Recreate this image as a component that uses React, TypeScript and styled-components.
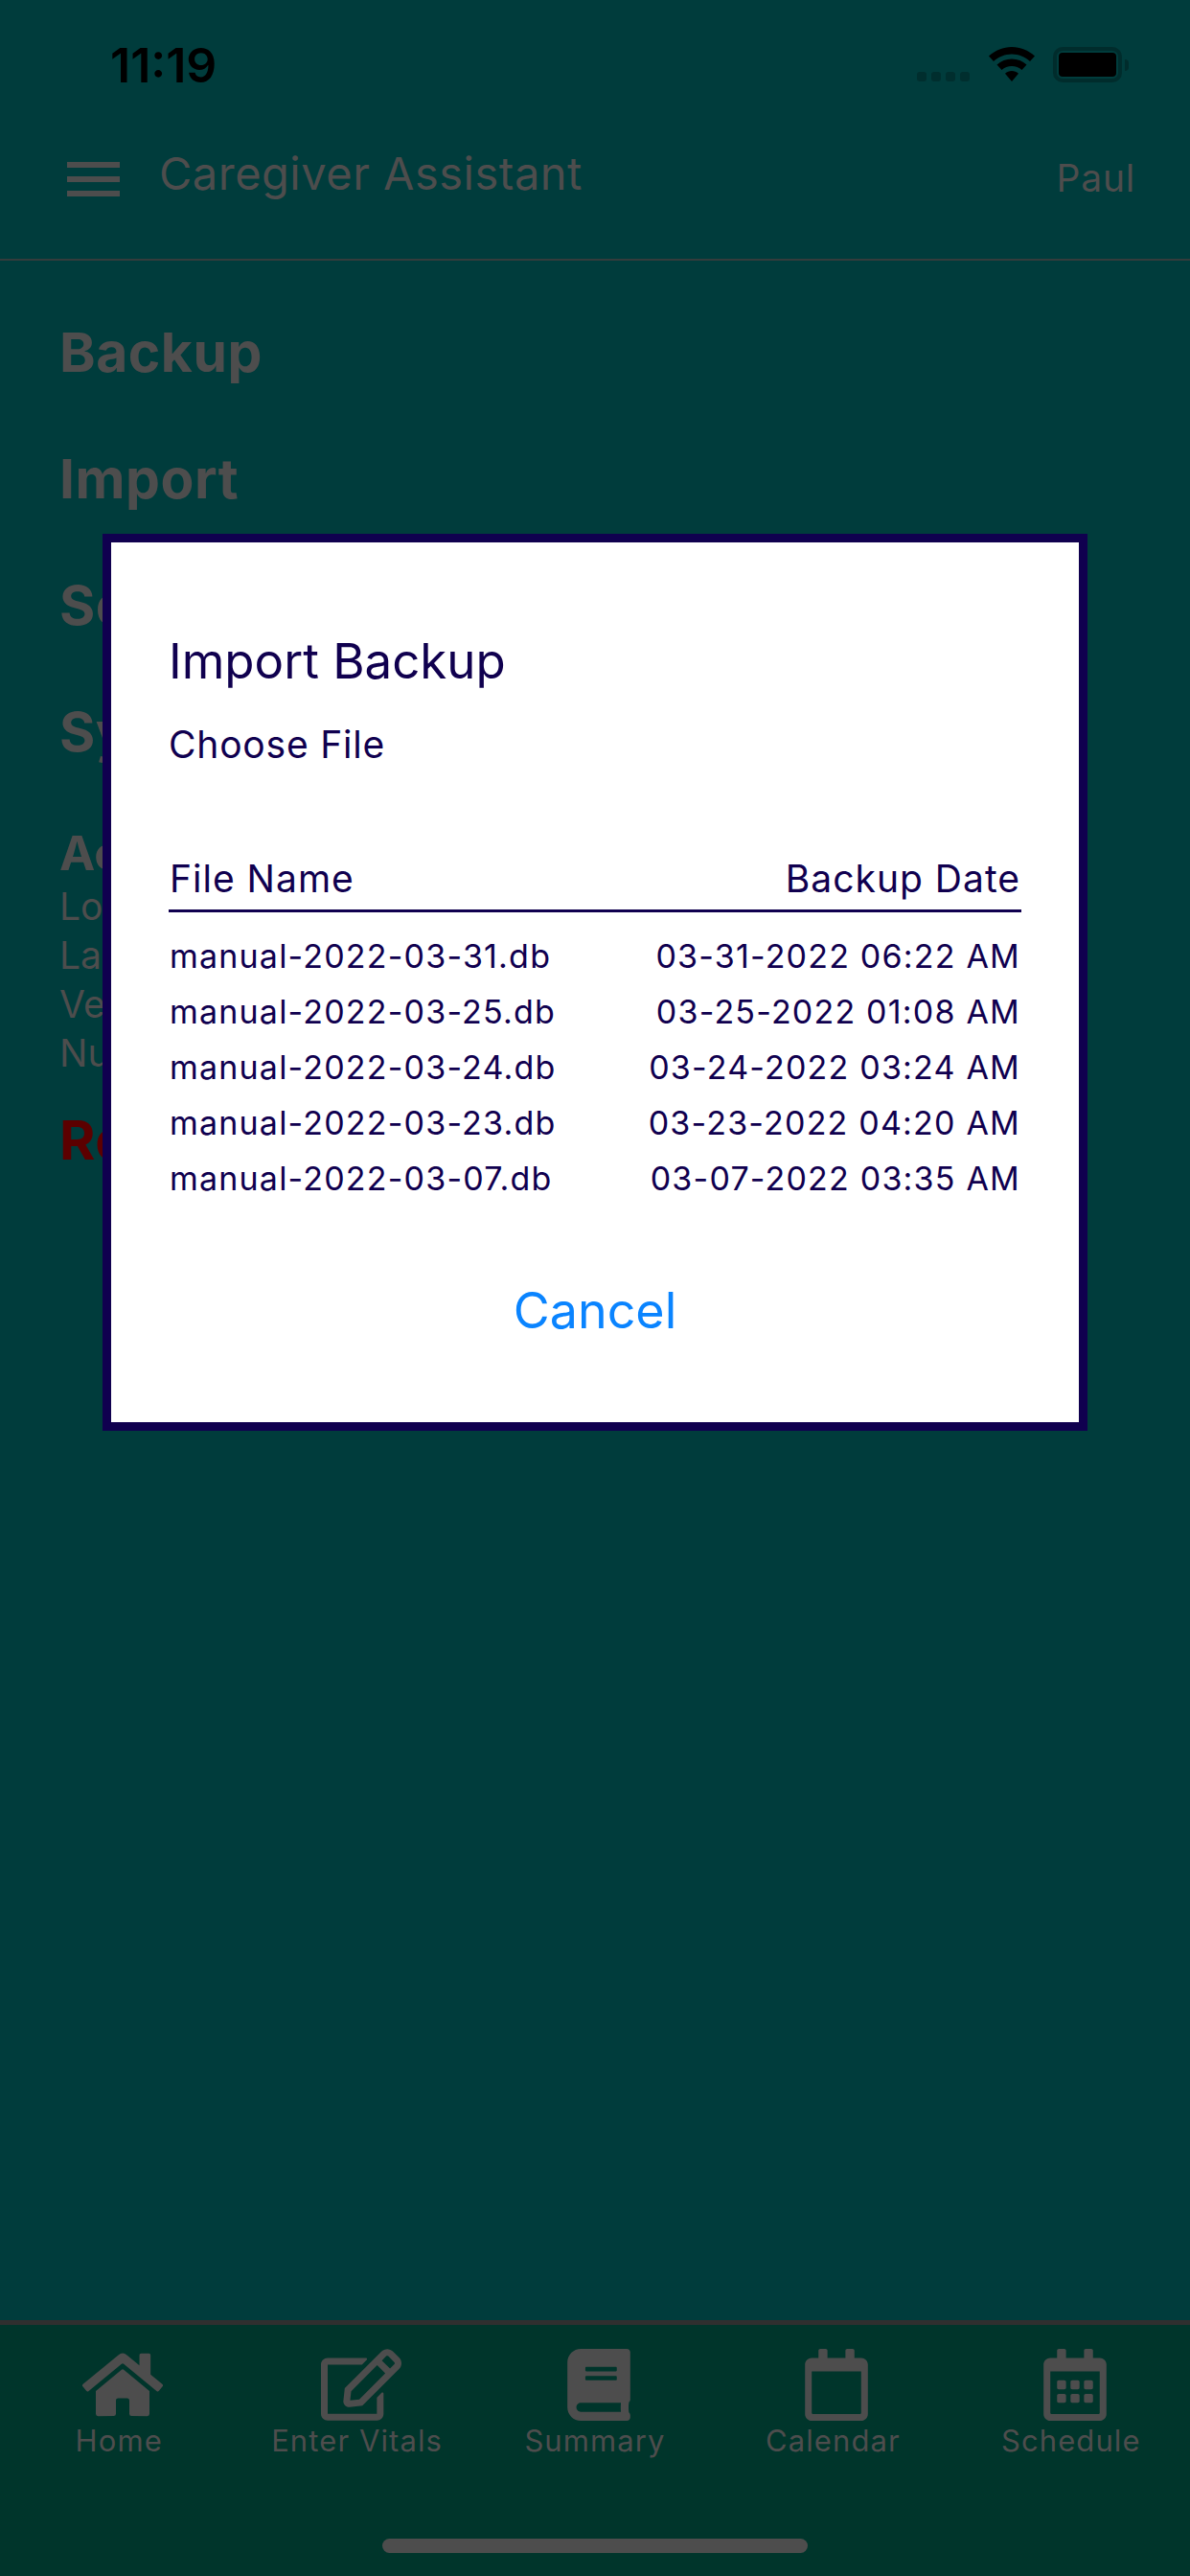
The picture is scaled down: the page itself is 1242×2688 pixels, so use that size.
import React from 'react';
import styled, { createGlobalStyle } from 'styled-components';
import { FaHome, FaRegEdit, FaBook, FaRegCalendar, FaRegCalendarAlt } from 'react-icons/fa';

const GlobalStyle = createGlobalStyle`
  html, body { margin: 0; padding: 0; background: #003c3c; }
  * { box-sizing: border-box; }
  body { font-family: Inter, "Noto Sans", sans-serif; }
`;

const DIM = '#4d4d4d';
const NAVY = '#10004f';

const Page = styled.div`
  position: relative;
  width: 1242px;
  height: 2688px;
  display: flex;
  flex-direction: column;
  overflow: hidden;
  background: #003c3c;
  color: ${DIM};
`;

const StatusBar = styled.div`
  height: 130px;
  display: flex;
  justify-content: space-between;
  padding: 48px 71px 0 115px;
`;

const Time = styled.div`
  font-size: 50px;
  line-height: 40px;
  font-weight: 600;
  color: #000;
`;

const StatusIcons = styled.div`
  display: flex;
  align-items: flex-start;
  margin-top: 1px;
`;

const SignalDots = styled.div`
  display: flex;
  gap: 5px;
  margin: 26px 20px 0 0;
`;

const SignalDot = styled.span`
  width: 10px;
  height: 10px;
  border-radius: 3px;
  background: #002e2e;
`;

const BatteryShell = styled.div`
  position: relative;
  width: 72px;
  height: 37px;
  margin-left: 19px;
  padding: 2px;
  border: 4px solid #002c2c;
  border-radius: 10px;
`;

const BatteryFill = styled.div`
  width: 100%;
  height: 100%;
  background: #000;
  border-radius: 4px;
`;

const BatteryCap = styled.span`
  position: absolute;
  right: -11px;
  top: 9px;
  width: 4px;
  height: 12px;
  border-radius: 0 4px 4px 0;
  background: #002c2c;
`;

const Nav = styled.header`
  height: 142px;
  display: flex;
  align-items: flex-start;
  padding: 0 57px 0 70px;
  border-bottom: 2px solid #343c3c;
`;

const MenuIcon = styled.div`
  width: 55px;
  margin-top: 39px;
  display: flex;
  flex-direction: column;
  gap: 9px;
`;

const MenuBar = styled.span`
  height: 6px;
  background: ${DIM};
`;

const NavTitle = styled.div`
  margin: 21px 0 0 41px;
  flex: 1;
  font-size: 47px;
  line-height: 60px;
  font-weight: 400;
  letter-spacing: 0.5px;
`;

const NavUser = styled.div`
  margin-top: 26px;
  font-size: 39px;
  line-height: 60px;
  font-weight: 400;
  letter-spacing: 0.8px;
`;

const Main = styled.main`
  flex: 1;
  padding: 30px 62px 0;
`;

const Action = styled.div<{ $danger?: boolean }>`
  height: 132px;
  font-size: 57px;
  line-height: 132px;
  font-weight: 700;
  letter-spacing: 0.5px;
  color: ${(p) => (p.$danger ? '#5c0000' : DIM)};
`;

const SectionTitle = styled.div`
  margin-top: 30px;
  font-size: 50px;
  line-height: 60px;
  font-weight: 700;
`;

const InfoLine = styled.div`
  font-size: 39px;
  line-height: 51px;
  font-weight: 400;
`;

const TabBar = styled.nav`
  height: 267px;
  display: flex;
  flex-direction: column;
  background: #00352b;
  border-top: 5px solid #2f2f2f;
`;

const Tabs = styled.div`
  display: grid;
  grid-template-columns: repeat(5, 1fr);
  padding-top: 25px;
`;

const Tab = styled.div`
  display: flex;
  flex-direction: column;
  align-items: center;
`;

const TabIcon = styled.div<{ $width: number }>`
  height: 75px;
  padding-left: 8px;
  display: flex;
  align-items: center;
  color: ${DIM};
  svg {
    display: block;
    width: ${(p) => p.$width}px;
    height: 75px;
  }
`;

const TabLabel = styled.div`
  font-size: 31px;
  line-height: 42px;
  font-weight: 400;
  letter-spacing: 1.1px;
`;

const HomeIndicator = styled.div`
  width: 444px;
  height: 15px;
  margin: 81px auto 0;
  border-radius: 8px;
  background: ${DIM};
`;

const Modal = styled.div`
  position: absolute;
  left: 107px;
  top: 557px;
  width: 1028px;
  height: 936px;
  padding: 0 60px;
  background: #fff;
  border: 9px solid ${NAVY};
  color: ${NAVY};
`;

const ModalTitle = styled.div`
  margin-top: 89px;
  font-size: 51px;
  line-height: 70px;
  font-weight: 400;
`;

const ChooseFile = styled.div`
  margin-top: 24px;
  font-size: 39px;
  line-height: 56px;
  font-weight: 400;
  letter-spacing: 0.8px;
`;

const TableHead = styled.div`
  display: flex;
  justify-content: space-between;
  margin-top: 84px;
  height: 63px;
  padding: 0 1px;
  font-size: 39px;
  line-height: 56px;
  letter-spacing: 1px;
  border-bottom: 3px solid ${NAVY};
`;

const FileList = styled.div`
  padding: 17px 1px 0;
`;

const FileRow = styled.div`
  display: flex;
  justify-content: space-between;
  height: 58px;
  font-size: 34px;
  line-height: 58px;
  letter-spacing: 1.2px;
`;

const CancelButton = styled.div`
  margin-top: 69px;
  text-align: center;
  font-size: 52px;
  line-height: 80px;
  color: #0a84ff;
`;

const WifiIcon = () => (
  <svg width="48" height="36" viewBox="0 0 48 36">
    <path d="M24 0C15 0 7 3.500 0 9.500L5 15C10.500 10.200 17 7.500 24 7.500S37.500 10.200 43 15L48 9.500C41 3.500 33 0 24 0Z" fill="#000" />
    <path d="M24 12.500C18 12.500 12.800 14.800 8.500 18.500L13.500 24C16.300 21.500 20 20 24 20S31.700 21.500 34.500 24L39.500 18.500C35.200 14.800 30 12.500 24 12.500Z" fill="#000" />
    <path d="M24 25C21.300 25 19 26 17 27.700L24 36L31 27.700C29 26 26.700 25 24 25Z" fill="#000" />
  </svg>
);

const files = [
  ['manual-2022-03-31.db', '03-31-2022 06:22 AM'],
  ['manual-2022-03-25.db', '03-25-2022 01:08 AM'],
  ['manual-2022-03-24.db', '03-24-2022 03:24 AM'],
  ['manual-2022-03-23.db', '03-23-2022 04:20 AM'],
  ['manual-2022-03-07.db', '03-07-2022 03:35 AM'],
];

const tabs = [
  { label: 'Home', width: 84, icon: <FaHome /> },
  { label: 'Enter Vitals', width: 84, icon: <FaRegEdit /> },
  { label: 'Summary', width: 66, icon: <FaBook /> },
  { label: 'Calendar', width: 66, icon: <FaRegCalendar /> },
  { label: 'Schedule', width: 66, icon: <FaRegCalendarAlt /> },
];

const App = () => {
  return (
    <Page>
      <GlobalStyle />
      <StatusBar>
        <Time>11:19</Time>
        <StatusIcons>
          <SignalDots>
            <SignalDot />
            <SignalDot />
            <SignalDot />
            <SignalDot />
          </SignalDots>
          <WifiIcon />
          <BatteryShell>
            <BatteryFill />
            <BatteryCap />
          </BatteryShell>
        </StatusIcons>
      </StatusBar>
      <Nav>
        <MenuIcon>
          <MenuBar />
          <MenuBar />
          <MenuBar />
        </MenuIcon>
        <NavTitle>Caregiver Assistant</NavTitle>
        <NavUser>Paul</NavUser>
      </Nav>
      <Main>
        <Action>Backup</Action>
        <Action>Import</Action>
        <Action>Send</Action>
        <Action>Sync</Action>
        <SectionTitle>Account</SectionTitle>
        <InfoLine>Login</InfoLine>
        <InfoLine>Last Sync</InfoLine>
        <InfoLine>Version</InfoLine>
        <InfoLine>Number</InfoLine>
        <Action $danger>Reset</Action>
      </Main>
      <TabBar>
        <Tabs>
          {tabs.map((t) => (
            <Tab key={t.label}>
              <TabIcon $width={t.width}>{t.icon}</TabIcon>
              <TabLabel>{t.label}</TabLabel>
            </Tab>
          ))}
        </Tabs>
        <HomeIndicator />
      </TabBar>
      <Modal>
        <ModalTitle>Import Backup</ModalTitle>
        <ChooseFile>Choose File</ChooseFile>
        <TableHead>
          <span>File Name</span>
          <span>Backup Date</span>
        </TableHead>
        <FileList>
          {files.map(([name, date]) => (
            <FileRow key={name}>
              <span>{name}</span>
              <span>{date}</span>
            </FileRow>
          ))}
        </FileList>
        <CancelButton>Cancel</CancelButton>
      </Modal>
    </Page>
  );
};

export default App;
